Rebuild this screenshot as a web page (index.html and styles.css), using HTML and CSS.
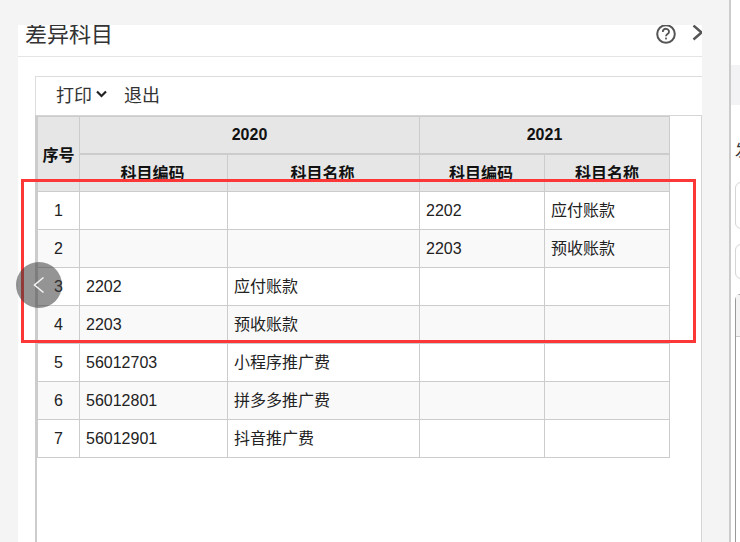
FILE: index.html
```html
<!DOCTYPE html>
<html lang="zh-CN">
<head>
<meta charset="utf-8">
<title>差异科目</title>
<link rel="stylesheet" href="styles.css">
</head>
<body>
<div class="page">
  <section class="dialog">
    <header class="dialog-head">
      <h1 class="dialog-title">差异科目</h1>
      <div class="head-icons">
        <svg class="icon-help" width="20" height="20" viewBox="0 0 20 20"><circle cx="10" cy="10" r="8.8" fill="none" stroke="#555" stroke-width="2"/><path d="M6.800 8c0-4.500 6.400-4.100 6.200 0 0 2-3 2.200-3 4.300" fill="none" stroke="#555" stroke-width="1.800"/><rect x="9.100" y="13.600" width="1.800" height="1.800" fill="#555"/></svg>
        <svg class="icon-next" width="12" height="18" viewBox="0 0 12 18"><path d="M1.500 1.500 9.500 8.500 1.500 15.500" fill="none" stroke="#555" stroke-width="2.400"/></svg>
      </div>
    </header>
    <div class="dialog-body">
      <div class="toolbar">
        <span class="tool">打印<svg class="caret" width="11" height="8" viewBox="0 0 11 8"><path d="M1 1.500 5.500 6 10 1.500" fill="none" stroke="#222" stroke-width="2.200"/></svg></span>
        <span class="tool">退出</span>
      </div>
      <div class="table-wrap">
        <table class="grid">
          <colgroup><col class="c-no"><col class="c-code"><col class="c-name"><col class="c-code2"><col class="c-name2"></colgroup>
          <thead>
            <tr><th rowspan="2">序号</th><th colspan="2">2020</th><th colspan="2">2021</th></tr>
            <tr><th class="nudge">科目编码</th><th class="nudge">科目名称</th><th class="nudge">科目编码</th><th>科目名称</th></tr>
          </thead>
          <tbody>
            <tr><td class="no">1</td><td></td><td></td><td>2202</td><td class="zh">应付账款</td></tr>
            <tr><td class="no">2</td><td></td><td></td><td>2203</td><td class="zh">预收账款</td></tr>
            <tr><td class="no">3</td><td>2202</td><td class="zh">应付账款</td><td></td><td></td></tr>
            <tr><td class="no">4</td><td>2203</td><td class="zh">预收账款</td><td></td><td></td></tr>
            <tr><td class="no">5</td><td>56012703</td><td class="zh">小程序推广费</td><td></td><td></td></tr>
            <tr><td class="no">6</td><td>56012801</td><td class="zh">拼多多推广费</td><td></td><td></td></tr>
            <tr><td class="no">7</td><td>56012901</td><td class="zh">抖音推广费</td><td></td><td></td></tr>
          </tbody>
        </table>
      </div>
    </div>
  </section>
  <aside class="side">
    <div class="side-band"></div>
    <div class="side-label">发</div>
    <div class="side-box box-a"></div>
    <div class="side-box box-b"></div>
    <div class="side-box box-c"><div class="box-c-top"></div></div>
  </aside>
</div>
<div class="annotation"></div>
<button class="prev" aria-label="上一张"><svg width="12" height="18" viewBox="0 0 12 18"><path d="M10.500 1.500 1.500 9 10.500 16.500" fill="none" stroke="#f4f4f4" stroke-width="1.600"/></svg></button>
</body>
</html>
```
FILE: styles.css
```css
* { box-sizing: border-box; }
html, body { margin: 0; height: 542px; overflow: hidden; }
body {
  position: relative;
  background: #f4f4f4;
  color: #222;
  font-family: "Liberation Sans", "Noto Sans CJK SC", sans-serif;
  font-size: 16px;
}
.page { display: flex; height: 542px; padding-left: 18px; }
.dialog {
  flex: none;
  width: 684px;
  margin-top: 25px;
  background: #fff;
  overflow: hidden;
  display: flex;
  flex-direction: column;
}
.dialog-head {
  flex: none;
  height: 32px;
  border-bottom: 1px solid #e5e5e5;
  display: flex;
  justify-content: space-between;
  align-items: flex-start;
  padding-left: 7px;
  overflow: hidden;
}
.dialog-title {
  margin: 0;
  font-size: 22px;
  font-weight: 400;
  line-height: 20px;
  color: #333;
}
.head-icons { display: flex; align-items: flex-start; margin-right: -2px; }
.icon-help { margin: -1px 0 0; flex: none; }
.icon-next { margin: -1px 0 0 16px; flex: none; }
.dialog-body {
  flex: 1;
  padding: 19px 0 0 17px;
  display: flex;
  flex-direction: column;
}
.toolbar {
  flex: none;
  height: 39px;
  border-top: 1px solid #ddd;
  border-left: 1px solid #ddd;
  padding: 0 0 4px 20px;
  display: flex;
  align-items: center;
  gap: 17px;
  font-size: 18px;
  color: #333;
}
.tool { display: inline-flex; align-items: center; }
.caret { margin-left: 4px; }
.table-wrap {
  flex: 1;
  border-top: 1px solid #d5d5d5;
  border-left: 2px solid #ccc;
  border-right: 1px solid #d5d5d5;
}
.grid {
  table-layout: fixed;
  width: 633px;
  border-collapse: separate;
  border-spacing: 0;
}
.c-no { width: 43px; }
.c-code { width: 148px; }
.c-name { width: 192px; }
.c-code2, .c-name2 { width: 125px; }
.grid th, .grid td {
  height: 38px;
  padding: 0;
  border-right: 1px solid #ccc;
  border-bottom: 1px solid #ccc;
}
.grid th {
  background: #e6e6e6;
  color: #111;
  font-weight: 700;
  text-align: center;
}
.grid thead tr:first-child th { border-top: 1px solid #ccc; }
.grid thead tr:nth-child(2) th { border-top: 1px solid #ccc; padding-bottom: 2px; }
.grid thead tr:nth-child(2) th.nudge { padding-right: 2px; }
.grid thead tr:first-child th:first-child, .grid td:first-child { border-left: 1px solid #ccc; }
.grid td { padding: 0 6px; color: #222; }
.grid td.zh { padding-bottom: 4px; }
.grid td.no { padding: 0; text-align: center; }
.grid tbody tr:nth-child(even) td { background: #f9f9f9; }
.side {
  flex: 1;
  margin-left: 27px;
  border-left: 2px solid #ccc;
  background: #fff;
  padding-top: 65px;
  display: flex;
  flex-direction: column;
  overflow: hidden;
  min-width: 0;
}
.side-band { flex: none; height: 40px; background: #f3f3f5; }
.side-label { flex: none; margin: 35px 0 0 4px; line-height: 22px; height: 42px; width: 20px; color: #333; }
.side-box {
  flex: none;
  margin-left: 4px;
  width: 60px;
  border: 1px solid #d5d5d5;
  border-radius: 6px 0 0 6px;
}
.box-a { height: 47px; }
.box-b { height: 35px; margin-top: 15px; }
.box-c {
  flex: 1;
  margin-top: 15px;
  border-color: #999;
  border-bottom: 0;
  border-radius: 6px 0 0 0;
}
.box-c-top { height: 42px; background: #f4f4f4; border-bottom: 1px solid #ccc; }
.annotation {
  position: absolute;
  left: 21px;
  top: 179px;
  width: 675px;
  height: 164px;
  border: 3px solid #fb3737;
  pointer-events: none;
}
.prev {
  position: absolute;
  left: 16px;
  top: 262px;
  width: 46px;
  height: 46px;
  padding: 0;
  border: 0;
  border-radius: 50%;
  background: rgba(60, 60, 60, 0.55);
  display: flex;
  align-items: center;
  justify-content: center;
}
```
